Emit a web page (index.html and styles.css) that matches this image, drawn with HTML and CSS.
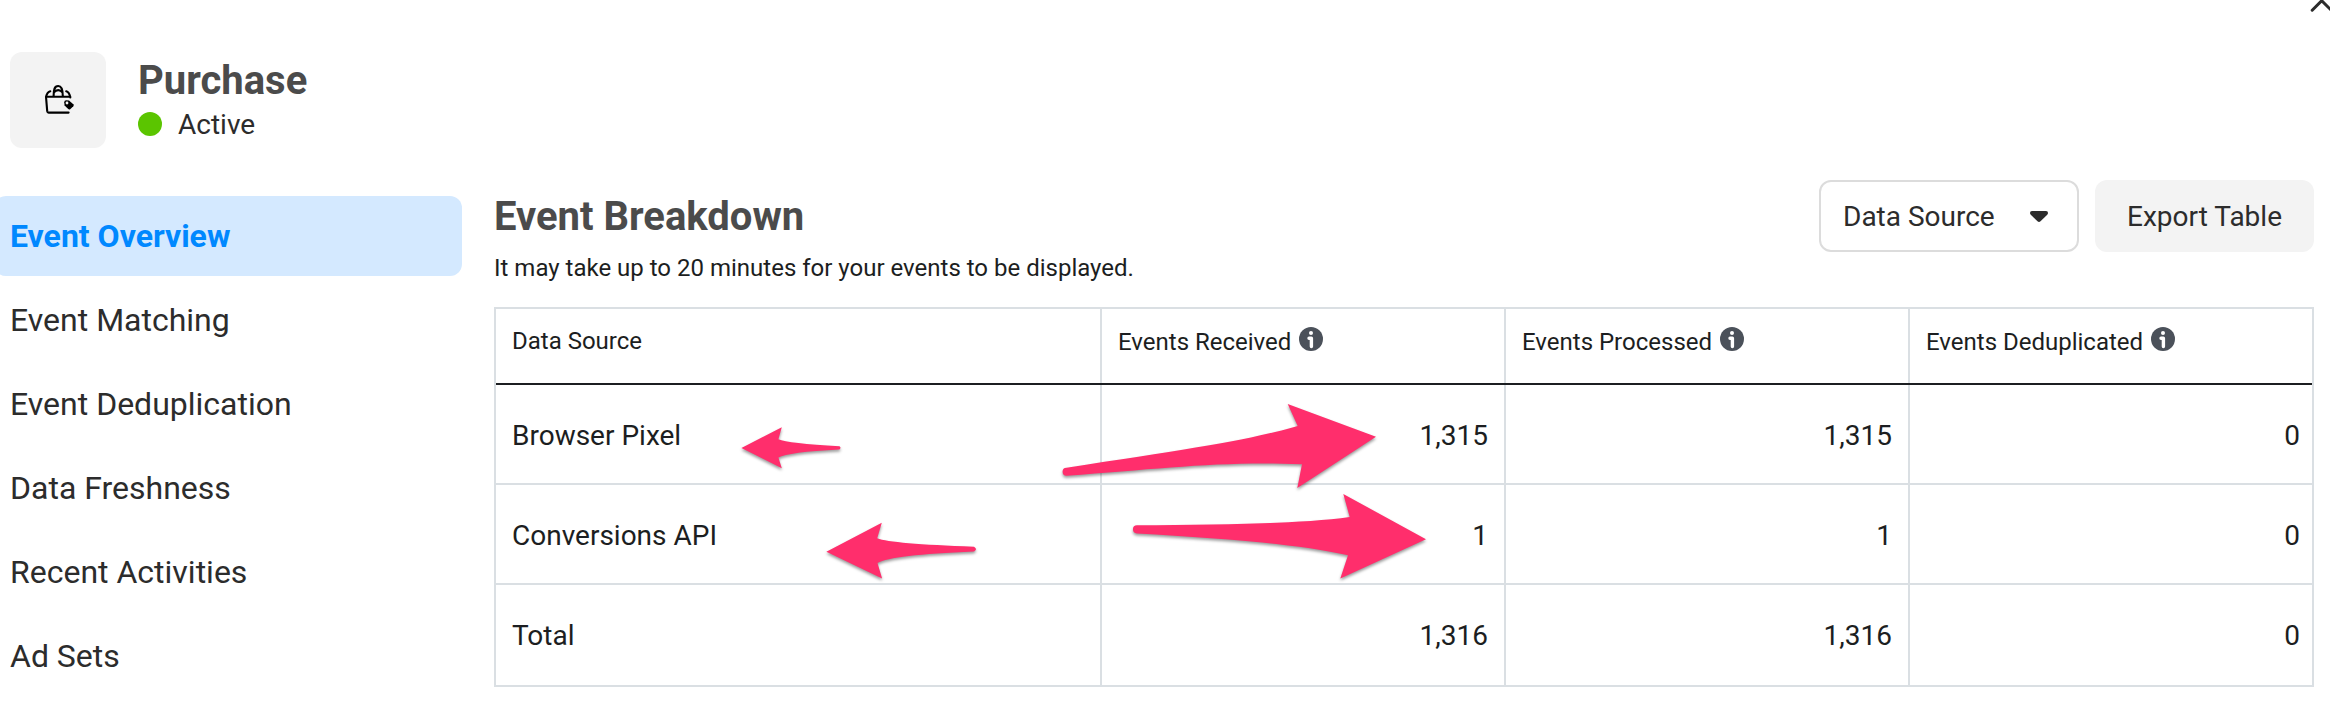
FILE: index.html
```html
<!DOCTYPE html>
<html lang="en">
<head>
    <meta charset="utf-8">
    <title>Purchase - Event Overview</title>
    <link rel="stylesheet" href="styles.css">
</head>
<body>
    <svg class="close" viewBox="0 0 20 14">
        <path d="M2.2 10.2 L11.7 0.7 L21.2 10.2"/>
    </svg>

    <header class="event-header">
        <div class="event-icon">
            <svg viewBox="-2 0 60 60">
                <path class="line" d="M20.3 21.2 C18 21.8 16.8 23.5 16 26.7 H40.3 V27.5 M36.2 21.2 C38.5 21.8 39.5 23.5 40.2 26.7 M16 26.7 L17.2 41.2 Q17.4 42.6 18.6 42.6 H38.6"/>
                <path class="line" d="M23.6 26 C23.6 19.5 24.4 16 28.2 16 C32 16 32.8 19.5 32.8 26 M24.2 22.2 C26 19.4 30.4 19.4 32.2 22.2"/>
                <path d="M34.2 32.2 Q34.2 30.2 36.2 30.2 L39 30.4 L43.3 34.2 Q44.2 35.2 43.3 36.2 L40.2 39.2 Q39.2 40 38.2 39.1 L34.6 35.6 Z"/>
                <circle class="hole" cx="37" cy="33" r="1.4"/>
            </svg>
        </div>
        <div>
            <h1>Purchase</h1>
            <div class="status"><span class="dot"></span>Active</div>
        </div>
    </header>

    <div class="layout">
        <nav class="sidebar">
            <a class="active">Event Overview</a>
            <a>Event Matching</a>
            <a>Event Deduplication</a>
            <a>Data Freshness</a>
            <a>Recent Activities</a>
            <a>Ad Sets</a>
        </nav>

        <main>
            <div class="toolbar">
                <div>
                    <h2>Event Breakdown</h2>
                    <p>It may take up to 20 minutes for your events to be displayed.</p>
                </div>
                <div class="actions">
                    <button class="select">Data Source
                        <svg viewBox="0 0 18 11"><path d="M2 0 H16 Q18 0 18 2 Q18 3 17 4 L10.5 10.2 Q9 11.6 7.5 10.2 L1 4 Q0 3 0 2 Q0 0 2 0 Z"/></svg>
                    </button>
                    <button class="export">Export Table</button>
                </div>
            </div>

            <div class="table-wrap">
                <table>
                    <colgroup>
                        <col class="c-source"><col class="c-num"><col class="c-num"><col class="c-last">
                    </colgroup>
                    <thead>
                        <tr>
                            <th>Data Source</th>
                            <th>Events Received<svg class="info" viewBox="0 0 24 24"><circle cx="12" cy="12" r="12"/><circle class="mark" cx="12" cy="5.9" r="2"/><path d="M10 11.2 H12.4 V19.6"/></svg></th>
                            <th>Events Processed<svg class="info" viewBox="0 0 24 24"><circle cx="12" cy="12" r="12"/><circle class="mark" cx="12" cy="5.9" r="2"/><path d="M10 11.2 H12.4 V19.6"/></svg></th>
                            <th>Events Deduplicated<svg class="info" viewBox="0 0 24 24"><circle cx="12" cy="12" r="12"/><circle class="mark" cx="12" cy="5.9" r="2"/><path d="M10 11.2 H12.4 V19.6"/></svg></th>
                        </tr>
                    </thead>
                    <tbody>
                        <tr><td>Browser Pixel</td><td>1,315</td><td>1,315</td><td>0</td></tr>
                        <tr><td>Conversions API</td><td>1</td><td>1</td><td>0</td></tr>
                        <tr class="total"><td>Total</td><td>1,316</td><td>1,316</td><td>0</td></tr>
                    </tbody>
                </table>

                <!-- arrows drawn over the table -->
                <svg class="arrows" viewBox="494 307 1820 380">
                    <path d="M741.4 448 L781.8 427.3 L778.4 439.3 Q788 443.4 839.5 446.3 Q841.5 447.8 839.5 449.4 Q788 452 778.4 457.5 L781.8 468.3 Z"/>
                    <path d="M826.4 551.7 L881.8 522.7 L877.2 538.3 Q892 544 974 546.7 Q978 549 974 551.6 Q892 555 877.5 563 L882.1 578.5 Z"/>
                    <path d="M1376 436.7 L1287.7 404 L1297.7 426 C1250 440 1190 449 1066.5 467.7 A4 4 0 0 0 1066.7 475.8 C1160 469 1220 461 1302 464.3 L1297.3 488 Z"/>
                    <path d="M1426 539.2 L1343.3 494 L1349.7 517 C1300 524 1220 524.5 1137 525.3 A4 4 0 0 0 1137 533.4 C1220 538 1300 544 1348 555.3 L1340.3 578.5 Z"/>
                </svg>
            </div>
        </main>
    </div>
</body>
</html>
```
FILE: styles.css
```css
* {
    box-sizing: border-box;
}
body {
    font-family: Roboto, 'Liberation Sans', sans-serif;
    background: #fff;
    color: #2c2c2c;
    margin: 0;
    height: 706px;
    overflow: hidden;
    position: relative;
}
h1, h2, p {
    margin: 0;
}
h1, h2 {
    font-size: 40px;
    line-height: 48px;
    font-weight: 700;
    color: #4b4b4b;
}
.close {
    position: absolute;
    top: 0;
    right: 0;
    width: 20px;
    height: 14px;
    fill: none;
    stroke: #2c2c2c;
    stroke-width: 3;
    stroke-linecap: round;
}
.event-header {
    display: flex;
    gap: 32px;
    padding: 52px 0 0 10px;
    height: 196px;
}
.event-icon {
    width: 96px;
    height: 96px;
    border-radius: 12px;
    background: #f3f3f3;
    display: flex;
    align-items: center;
    justify-content: center;
}
.event-icon svg {
    width: 60px;
    height: 60px;
}
.event-icon .line {
    fill: none;
    stroke: #000;
    stroke-width: 2.1;
    stroke-linecap: round;
    stroke-linejoin: round;
}
.event-icon .hole {
    fill: #f3f3f3;
}
.event-header h1 {
    margin-top: 5px;
}
.status {
    display: flex;
    align-items: center;
    gap: 16px;
    font-size: 28px;
    line-height: 40px;
}
.dot {
    width: 24px;
    height: 24px;
    border-radius: 50%;
    background: #5bc500;
    margin-top: -2px;
}
.layout {
    display: flex;
}
.sidebar {
    width: 468px;
    margin-left: -6px;
    display: flex;
    flex-direction: column;
    gap: 4px;
}
.sidebar a {
    height: 80px;
    padding-left: 16px;
    border-radius: 12px;
    font-size: 32px;
    line-height: 80px;
}
.sidebar .active {
    background: #d4e9ff;
    color: #0088ff;
    font-weight: 700;
}
main {
    width: 1820px;
    margin-left: 32px;
}
.toolbar {
    display: flex;
    justify-content: space-between;
    height: 111px;
}
.toolbar h2 {
    margin-top: -3px;
}
.toolbar p {
    margin-top: 11px;
    font-size: 24px;
    line-height: 32px;
    color: #1c1e21;
}
.actions {
    display: flex;
    gap: 16px;
    margin-top: -16px;
}
button {
    height: 72px;
    border-radius: 12px;
    border: none;
    font-family: inherit;
    font-size: 28px;
    color: #2c2c2c;
}
.select {
    display: flex;
    align-items: center;
    justify-content: space-between;
    width: 260px;
    padding: 0 29px 0 22px;
    background: #fff;
    border: 2px solid #dcdcdc;
}
.select svg {
    width: 18px;
    height: 11px;
    fill: #2c2c2c;
}
.export {
    width: 219px;
    background: #f3f3f3;
}
.table-wrap {
    position: relative;
    border: 2px solid #dadfe3;
}
table {
    width: 1816px;
    table-layout: fixed;
    border-collapse: separate;
    border-spacing: 0;
    color: #1c1e21;
}
.c-source {
    width: 606px;
}
.c-num {
    width: 404px;
}
.c-last {
    width: 402px;
}
th, td {
    padding: 0 16px;
    text-align: right;
    border-right: 2px solid #dadfe3;
    border-bottom: 2px solid #dadfe3;
}
th {
    height: 76px;
    padding-bottom: 10px;
    text-align: left;
    font-size: 24px;
    font-weight: 400;
    border-right: none;
    border-bottom-color: #1c1e21;
    box-shadow: inset -2px 0 #dadfe3;
}
td {
    height: 100px;
    padding-top: 2px;
    font-size: 28px;
}
td:first-child {
    text-align: left;
}
td:last-child {
    border-right: none;
    padding-right: 12px;
}
th:last-child {
    box-shadow: none;
}
.total td {
    padding-bottom: 2px;
    border-bottom: none;
}
.info {
    width: 24px;
    height: 24px;
    margin-left: 8px;
    vertical-align: -1px;
    fill: #4b515a;
}
.info .mark {
    fill: #fff;
}
.info path {
    fill: none;
    stroke: #fff;
    stroke-width: 3.4;
    stroke-linecap: round;
    stroke-linejoin: round;
}
.arrows {
    position: absolute;
    top: -2px;
    left: -2px;
    width: 1820px;
    height: 380px;
    fill: #ff2e6c;
    filter: drop-shadow(0 2px 1.5px rgba(0, 0, 0, 0.4));
}
```
